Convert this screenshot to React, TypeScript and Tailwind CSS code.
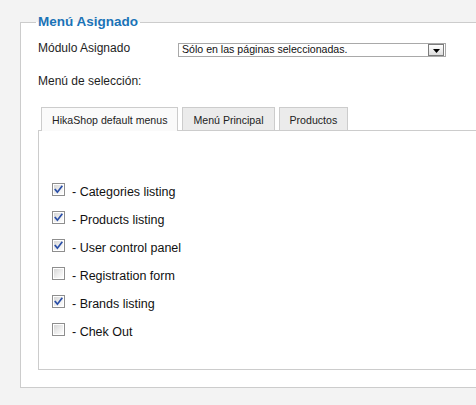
import React from "react";

type Item = { label: string; checked: boolean };

const items: Item[] = [
  { label: "- Categories listing", checked: true },
  { label: "- Products listing", checked: true },
  { label: "- User control panel", checked: true },
  { label: "- Registration form", checked: false },
  { label: "- Brands listing", checked: true },
  { label: "- Chek Out", checked: false },
];

function Checkbox({ checked }: { checked: boolean }) {
  return (
    <div className="w-[13px] h-[13px] shrink-0 border border-[#8e8e8e] bg-white p-px">
      <div className="w-full h-full bg-gradient-to-br from-[#d6d6d6] via-[#ececec] to-[#fdfdfd] flex items-center justify-center">
        {checked && (
          <svg width="9" height="9" viewBox="0 0 9 9">
            <path
              d="M1.3 4.6 L3.4 7.2 L7.8 1.4"
              fill="none"
              stroke="#2a4fa8"
              strokeWidth="1.7"
              strokeLinecap="square"
            />
          </svg>
        )}
      </div>
    </div>
  );
}

function Tab({ label, active }: { label: string; active?: boolean }) {
  return active ? (
    <div className="relative z-10 h-[24px] -mb-px border border-b-0 border-[#cccccc] bg-[#fafafa] px-[10px] pt-[6px] text-[10.6px] leading-[12px] text-[#222]">
      {label}
    </div>
  ) : (
    <div className="h-[23px] border border-b-0 border-[#cccccc] bg-[#ebebeb] px-[10px] pt-[6px] text-[10.6px] leading-[12px] text-[#222]">
      {label}
    </div>
  );
}

export default function App() {
  return (
    <div
      className="w-[476px] h-[405px] overflow-hidden bg-[#f3f3f3] pt-[14px] pl-[20px]"
      style={{ fontFamily: '"Liberation Sans", Arial, sans-serif' }}
    >
      <fieldset className="w-[470px] border border-[#cccccc] bg-white pl-[17px] pr-0 pt-0 pb-[17px] m-0">
        <legend className="-ml-[2px] px-[2px] text-[13.5px] leading-[16px] font-bold text-[#1b73b7]">
          Menú Asignado
        </legend>

        {/* module assignment row */}
        <div className="mt-[13px] flex items-start h-[14px]">
          <div className="w-[140px] text-[12px] leading-[10px] text-[#1e1e1e]">
            Módulo Asignado
          </div>
          <div className="w-[268px] h-[14px] border border-[#a9a9a9] bg-white flex items-start justify-between">
            <span className="pl-[3px] text-[10.6px] leading-[10px] text-[#111]">
              Sólo en las páginas seleccionadas.
            </span>
            <div className="w-[16px] h-[12px] mr-px border border-[#7c7c7c] bg-gradient-to-b from-white to-[#dedede] flex items-end justify-center pb-[2px]">
              <svg width="7" height="4" viewBox="0 0 7 4">
                <path d="M0 0 H7 L3.5 4 Z" fill="#000" />
              </svg>
            </div>
          </div>
        </div>

        <div className="mt-[17px] text-[12px] leading-[14px] text-[#1e1e1e]">
          Menú de selección:
        </div>

        {/* tabs */}
        <div className="mt-[19px] flex items-end gap-[4px] pl-[3px]">
          <Tab label="HikaShop default menus" active />
          <Tab label="Menú Principal" />
          <Tab label="Productos" />
        </div>

        <div className="h-[240px] border border-[#cccccc] bg-white pl-[13px] pt-[52px] flex flex-col gap-[15px]">
          {items.map((it) => (
            <div key={it.label} className="flex items-start h-[13px]">
              <Checkbox checked={it.checked} />
              <span className="ml-[7px] mt-[3px] text-[12.5px] leading-[13px] text-[#111] whitespace-nowrap">
                {it.label}
              </span>
            </div>
          ))}
        </div>
      </fieldset>
    </div>
  );
}
